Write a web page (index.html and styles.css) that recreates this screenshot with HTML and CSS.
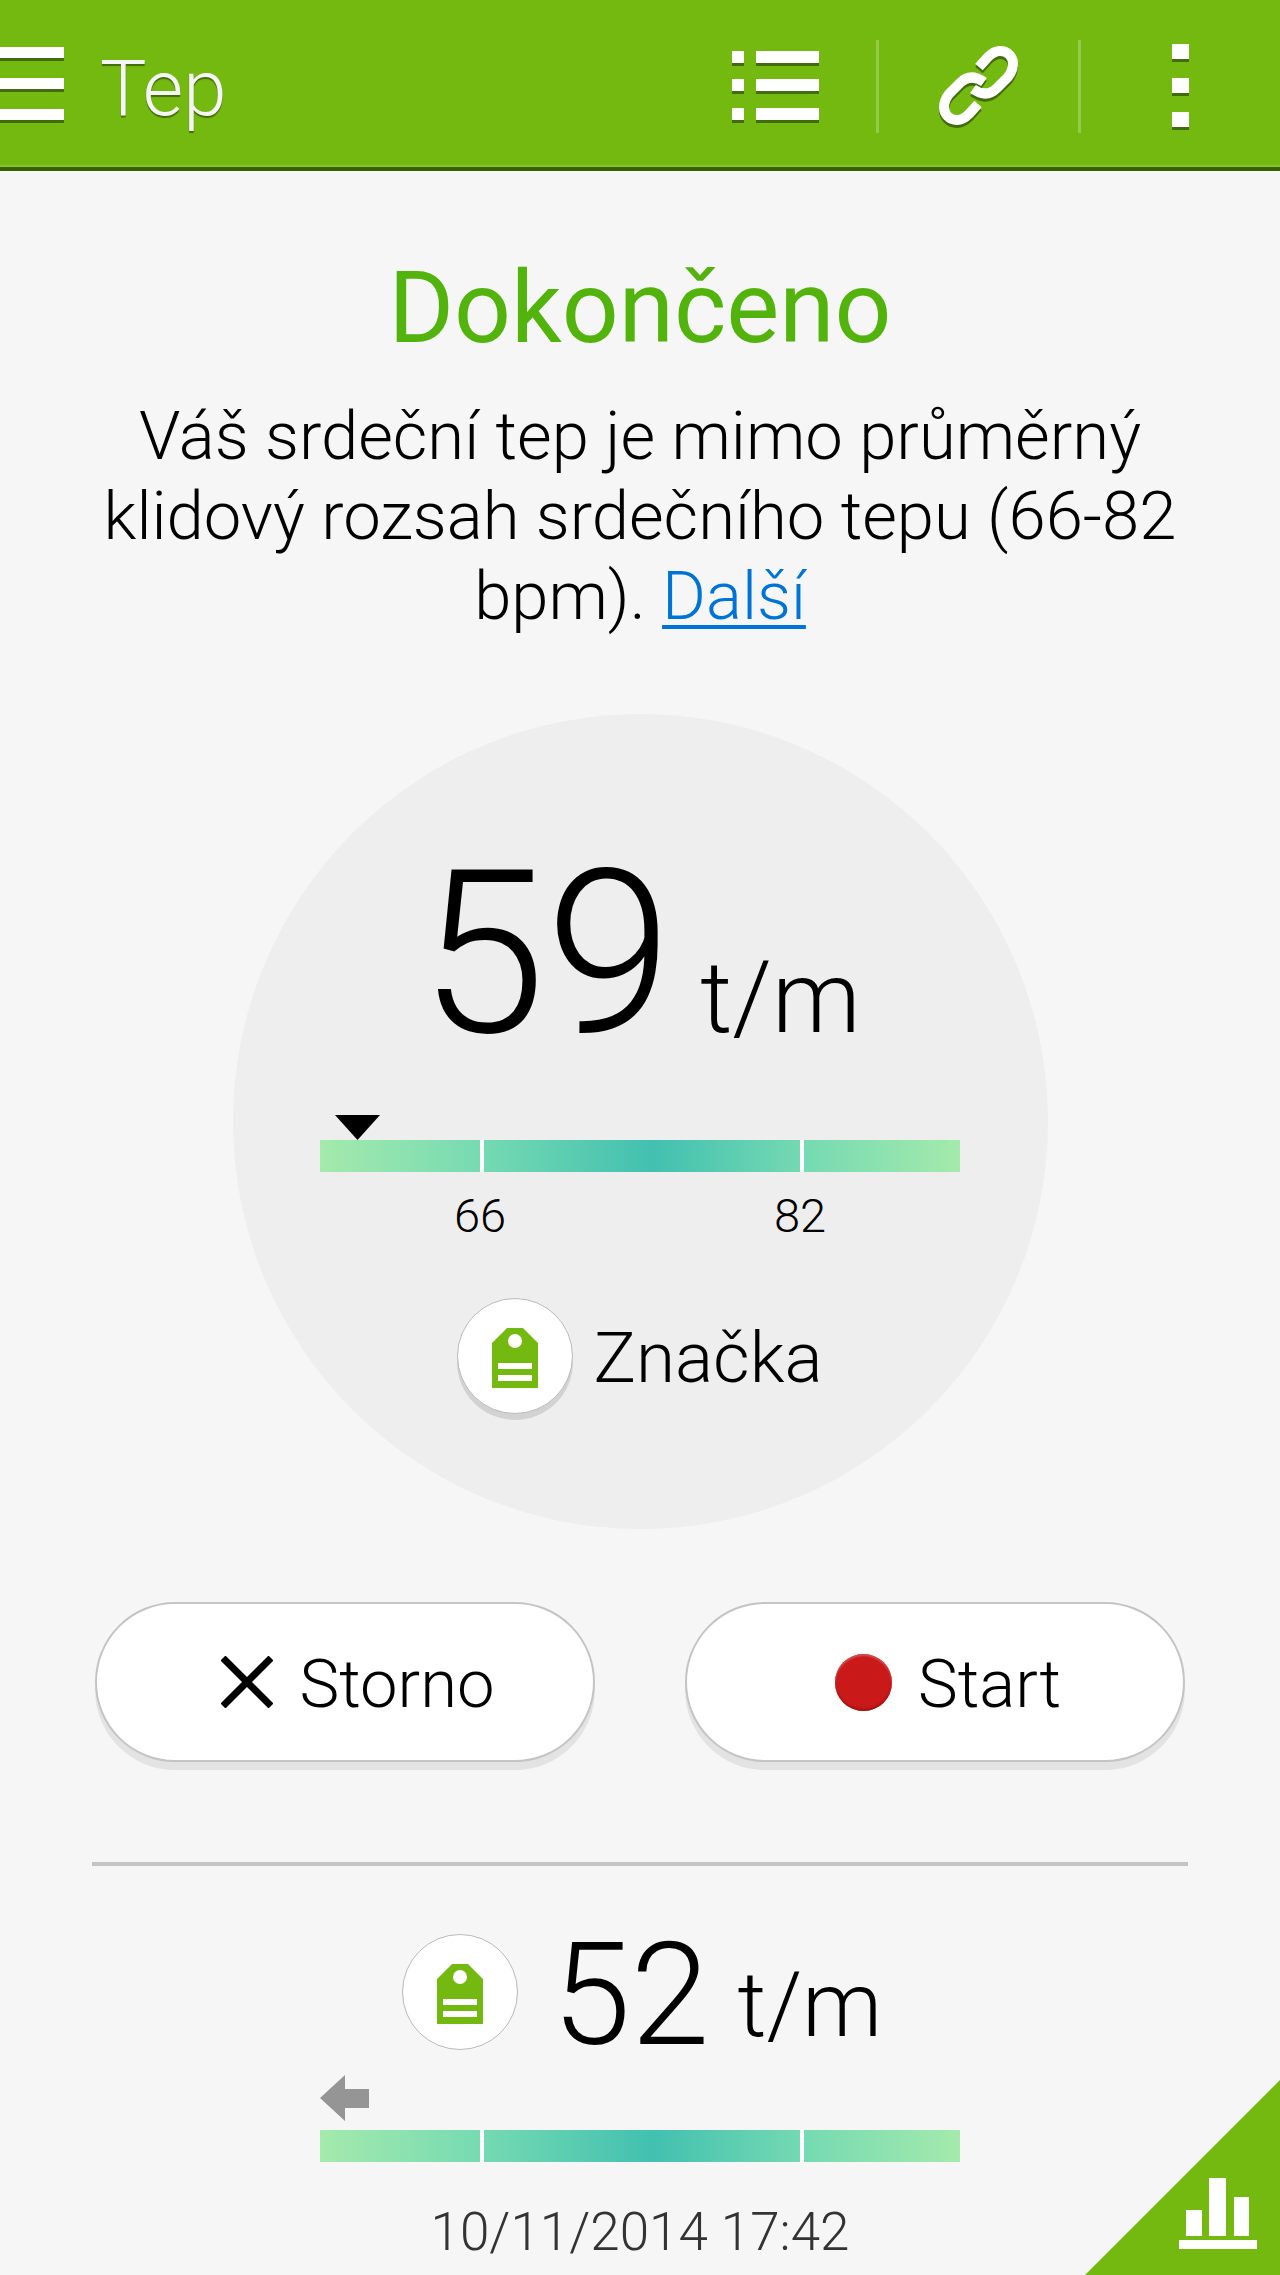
FILE: index.html
```html
<!DOCTYPE html>
<html lang="cs">
<head>
<meta charset="utf-8">
<meta name="viewport" content="width=device-width, initial-scale=1">
<title>Tep</title>
<link rel="stylesheet" href="styles.css">
</head>
<body>
<div class="app">
  <header class="bar">
    <button class="bar-btn menu" type="button" aria-label="Nabídka">
      <svg class="icon" width="64" height="80" viewBox="0 0 64 80"><path d="M0 3h64v11H0zM0 34h64v11H0zM0 65h64v11H0z"/></svg>
    </button>
    <h1 class="bar-title">Tep</h1>
    <nav class="bar-actions">
      <button class="bar-btn action" type="button" aria-label="Seznam">
        <svg class="icon" width="88" height="88" viewBox="0 0 88 88"><path d="M1 9h12v12H1zM25 9h63v12H25zM1 37h12v12H1zM25 37h63v12H25zM1 66h12v12H1zM25 66h63v12H25z"/></svg>
      </button>
      <button class="bar-btn action" type="button" aria-label="Propojit">
        <svg class="icon link" width="80" height="84" viewBox="0 0 80 84"><path d="M40 23L49 13C54 8 57 7 61 7C69 7 74 13 74 20C74 25 72 29 69 33L58 44C52 50 44 52 34 45M39 60L30 70C25 75 22 76 18 76C10 76 5 70 5 63C5 58 7 54 10 50L21 39C27 33 35 31 45 38"/></svg>
      </button>
      <button class="bar-btn action more" type="button" aria-label="Další možnosti">
        <svg class="icon" width="17" height="84" viewBox="0 0 17 84"><path d="M0 0h17v15H0zM0 34h17v15H0zM0 68h17v15H0z"/></svg>
      </button>
    </nav>
  </header>

  <main class="content">
    <h2 class="status">Dokončeno</h2>
    <p class="message">Váš srdeční tep je mimo průměrný klidový rozsah srdečního tepu (66-82 bpm). <a href="#dalsi">Další</a></p>

    <section class="dial" aria-label="Aktuální měření">
      <p class="reading"><span class="number">59</span><span class="unit">t/m</span></p>
      <div class="scale">
        <svg class="marker" style="margin-left:15px" width="45" height="25" viewBox="0 0 45 25"><path d="M0 0h45L22.500 25z"/></svg>
        <div class="range"><i></i><i></i><i></i></div>
        <div class="limits"><span>66</span><span>82</span></div>
      </div>
      <button class="tag" type="button">
        <span class="tag-disc raised"><svg width="46" height="60" viewBox="0 0 46 60"><path class="leaf" fill-rule="evenodd" d="M15 0h16l15 15v45H0V15zM23 6a7 7 0 1 0 0 14a7 7 0 1 0 0-14zM6 35v6h34v-6zM6 47v6h34v-6z"/></svg></span>
        <span class="label">Značka</span>
      </button>
    </section>

    <div class="buttons">
      <button class="pill" type="button">
        <svg class="glyph" width="52" height="52" viewBox="0 0 52 52"><path d="M2 2L50 50M50 2L2 50" stroke="#000" stroke-width="7"/></svg>
        <span class="label">Storno</span>
      </button>
      <button class="pill" type="button">
        <span class="record"></span>
        <span class="label">Start</span>
      </button>
    </div>

    <hr class="rule">

    <section class="previous" aria-label="Předchozí měření">
      <div class="previous-head">
        <span class="tag-disc"><svg width="46" height="60" viewBox="0 0 46 60"><path class="leaf" fill-rule="evenodd" d="M15 0h16l15 15v45H0V15zM23 6a7 7 0 1 0 0 14a7 7 0 1 0 0-14zM6 35v6h34v-6zM6 47v6h34v-6z"/></svg></span>
        <span class="number">52</span>
        <span class="unit">t/m</span>
      </div>
      <div class="scale">
        <svg class="arrow" width="49" height="46" viewBox="0 0 49 46"><path d="M0 23L25 0v14h24v19H25v13z"/></svg>
        <div class="range"><i></i><i></i><i></i></div>
      </div>
      <time class="date" datetime="2014-11-10T17:42">10/11/2014 17:42</time>
    </section>
  </main>

  <a class="corner" href="#graf" aria-label="Graf">
    <svg width="78" height="72" viewBox="0 0 78 72"><path d="M7 32h16v26H7zM30 0h17v58H30zM55 19h15v39H55zM0 62h78v9H0z"/></svg>
  </a>
</div>
</body>
</html>
```
FILE: styles.css
```css
* { box-sizing: border-box; }

body {
  margin: 0;
  background: #f6f6f6;
  color: #000;
  font-family: Roboto, "Noto Sans", sans-serif;
  font-weight: 350;
}

button {
  margin: 0;
  padding: 0;
  border: 0;
  background: none;
  color: inherit;
  font: inherit;
  cursor: pointer;
}

h1, h2, p { margin: 0; font-weight: inherit; }
svg { display: block; flex: none; }

.app { position: relative; min-height: 100vh; }

/* Top bar */
.bar {
  display: flex;
  align-items: center;
  height: 171px;
  background: #74b90f;
  border-bottom: 4px solid #396000;
  box-shadow: inset 0 -2px #85c22f;
}

.bar-btn { display: flex; align-items: center; justify-content: center; }
.icon { fill: #fff; filter: drop-shadow(0 3px 0 #426b0b); }
.link { fill: none; stroke: #fff; stroke-width: 10; }

.bar-title {
  padding: 10px 0 0 36px;
  color: #f5f5f5;
  font-size: 78px;
  line-height: 94px;
  text-shadow: 0 2px 1px #426b0b;
}

.bar-actions { display: flex; margin: 5px 0 0 auto; }
.action { width: 202px; height: 93px; border-left: 3px solid #96ca4a; }
.action:first-child { border-left: 0; }

/* Result */
.content {
  display: flex;
  flex-direction: column;
  align-items: center;
  padding: 77px 92px 11px;
}

.status {
  color: #52b30d;
  font-size: 100px;
  font-weight: 400;
  line-height: 120px;
}

.message {
  margin: 28px 0 0;
  font-size: 67px;
  line-height: 80px;
  text-align: center;
}

.message a {
  color: #0073d8;
  text-decoration-thickness: 4px;
  text-underline-offset: 6px;
}

.dial {
  display: flex;
  flex-direction: column;
  align-items: center;
  width: 815px;
  max-width: 100%;
  min-height: 815px;
  margin-top: 78px;
  padding-top: 126px;
  border-radius: 50%;
  background: #eee;
}

.reading {
  display: flex;
  align-items: baseline;
  gap: 28px;
  line-height: 228px;
}

.reading .number { font-size: 228px; }
.reading .unit { font-size: 100px; line-height: 120px; }

.scale { width: 640px; max-width: 100%; }
.dial .scale { margin-top: 47px; }

.range {
  display: grid;
  grid-template-columns: 1fr 2fr 1fr;
  height: 32px;
  background: linear-gradient(90deg, #a4eaac, #76dab2 25%, #42c0b0 52%, #76dab2 76%, #a4eaac);
}

.range i + i { border-left: 4px solid #fff; }

.limits {
  display: grid;
  grid-template-columns: 1fr 1fr;
  margin-top: 16px;
  font-size: 47px;
  line-height: 56px;
  text-align: center;
}

.tag {
  display: flex;
  align-items: center;
  gap: 20px;
  margin-top: 54px;
  font-size: 71px;
  line-height: 84px;
}

.label { padding-top: 4px; }

.tag-disc {
  display: flex;
  align-items: center;
  justify-content: center;
  flex: none;
  width: 116px;
  height: 116px;
  padding-top: 4px;
  border: 1px solid #bbb;
  border-radius: 50%;
  background: #fff;
}

.raised { box-shadow: 0 6px #d2d2d2; }
.leaf { fill: #74b90f; }

/* Actions */
.buttons {
  display: grid;
  grid-template-columns: 1fr 1fr;
  gap: 90px;
  align-self: stretch;
  margin: 73px 3px 0;
}

.pill {
  display: flex;
  align-items: center;
  justify-content: center;
  gap: 26px;
  height: 160px;
  padding-left: 26px;
  border: 2px solid #c4c4c4;
  border-radius: 80px;
  background: #fff;
  box-shadow: 0 8px #e3e3e3;
  font-size: 67px;
  line-height: 80px;
}

.record {
  width: 57px;
  height: 57px;
  border-radius: 50%;
  background: #c91919;
  box-shadow: inset 0 2px 2px #d65050, inset 0 -2px 2px #a01414;
}

.rule {
  align-self: stretch;
  height: 4px;
  margin: 100px 0 0;
  border: 0;
  background: #c4c4c4;
}

/* Previous reading */
.previous {
  display: flex;
  flex-direction: column;
  align-items: center;
  max-width: 100%;
  margin-top: 68px;
}

.previous-head { display: flex; align-items: flex-end; height: 124px; padding-left: 4px; }
.previous-head .tag-disc { align-self: flex-start; margin-right: 34px; }
.previous-head .number { font-size: 142px; line-height: 124px; }
.previous-head .unit { margin-left: 28px; font-size: 90px; line-height: 104px; }
.previous .scale { margin-top: 17px; }
.arrow { margin-bottom: 9px; fill: #959595; }

.date {
  margin-top: 38px;
  color: #333;
  font-size: 53px;
  line-height: 64px;
}

.corner {
  position: absolute;
  right: 0;
  bottom: 0;
  display: flex;
  align-items: flex-end;
  justify-content: flex-end;
  width: 195px;
  height: 195px;
  padding: 0 23px 25px 0;
  background: #74b90f;
  clip-path: polygon(100% 0, 100% 100%, 0 100%);
}

.corner svg { fill: #fff; }
```
